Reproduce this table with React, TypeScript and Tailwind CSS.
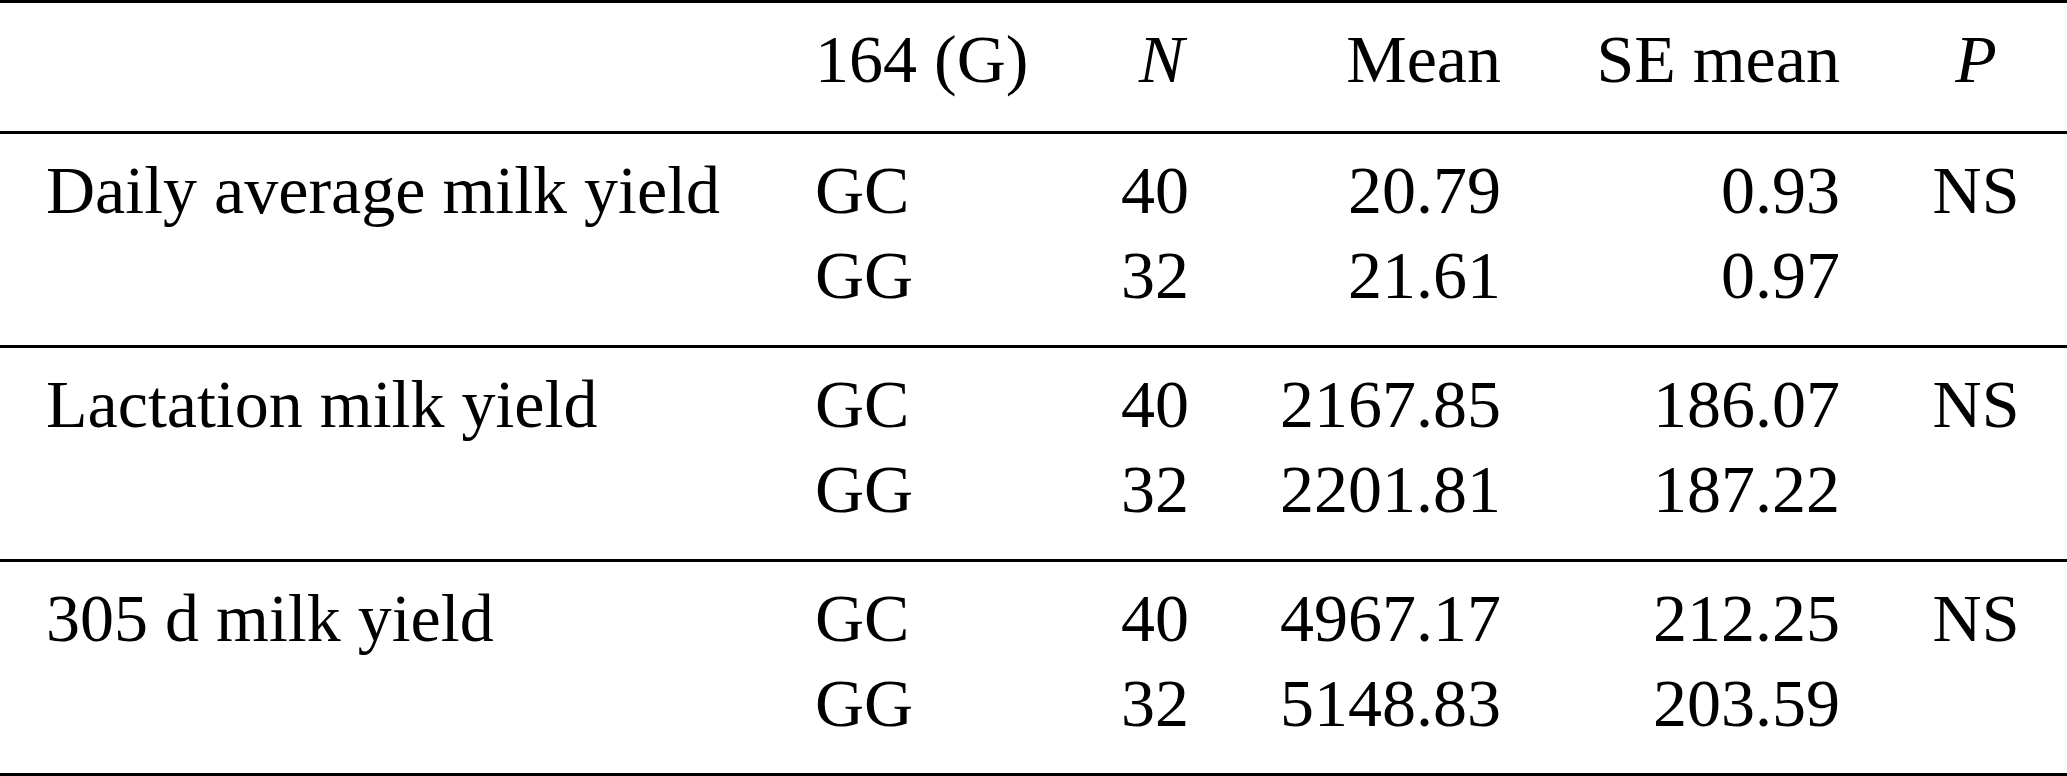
interface Row {
  genotype: string;
  n: string;
  mean: string;
  se: string;
}

interface Trait {
  name: string;
  p: string;
  rows: Row[];
}

const traits: Trait[] = [
  {
    name: "Daily average milk yield",
    p: "NS",
    rows: [
      { genotype: "GC", n: "40", mean: "20.79", se: "0.93" },
      { genotype: "GG", n: "32", mean: "21.61", se: "0.97" },
    ],
  },
  {
    name: "Lactation milk yield",
    p: "NS",
    rows: [
      { genotype: "GC", n: "40", mean: "2167.85", se: "186.07" },
      { genotype: "GG", n: "32", mean: "2201.81", se: "187.22" },
    ],
  },
  {
    name: "305 d milk yield",
    p: "NS",
    rows: [
      { genotype: "GC", n: "40", mean: "4967.17", se: "212.25" },
      { genotype: "GG", n: "32", mean: "5148.83", se: "203.59" },
    ],
  },
];

// shared column template so every block lines up
const cols = "grid grid-cols-[815px_285px_89px_312px_339px_1fr] leading-[85px]";

const App = () => {
  return (
    <div className="w-[2067px] h-[776px] bg-white text-black font-['Liberation_Serif',serif] text-[68px] overflow-hidden">
      {/* Header */}
      <div className={`${cols} border-t-[3px] border-black pt-[14px] pb-[29px]`}>
        <div className="pl-[46px]"></div>
        <div>164 (G)</div>
        <div className="text-right italic pr-[5px]">N</div>
        <div className="text-right">Mean</div>
        <div className="text-right">SE mean</div>
        <div className="text-center pl-[45px] italic">P</div>
      </div>

      {/* Body */}
      {traits.map((trait) => (
        <div
          key={trait.name}
          className={`${cols} border-t-[3px] border-black pt-[14px] pb-[27px]`}
        >
          {trait.rows.map((row, i) => (
            <div key={row.genotype} className="contents">
              <div className="pl-[46px] whitespace-nowrap">{i === 0 ? trait.name : ""}</div>
              <div>{row.genotype}</div>
              <div className="text-right">{row.n}</div>
              <div className="text-right">{row.mean}</div>
              <div className="text-right">{row.se}</div>
              <div className="text-center pl-[45px]">{i === 0 ? trait.p : ""}</div>
            </div>
          ))}
        </div>
      ))}
      <div className="border-t-[3px] border-black"></div>
    </div>
  );
};

export default App;
